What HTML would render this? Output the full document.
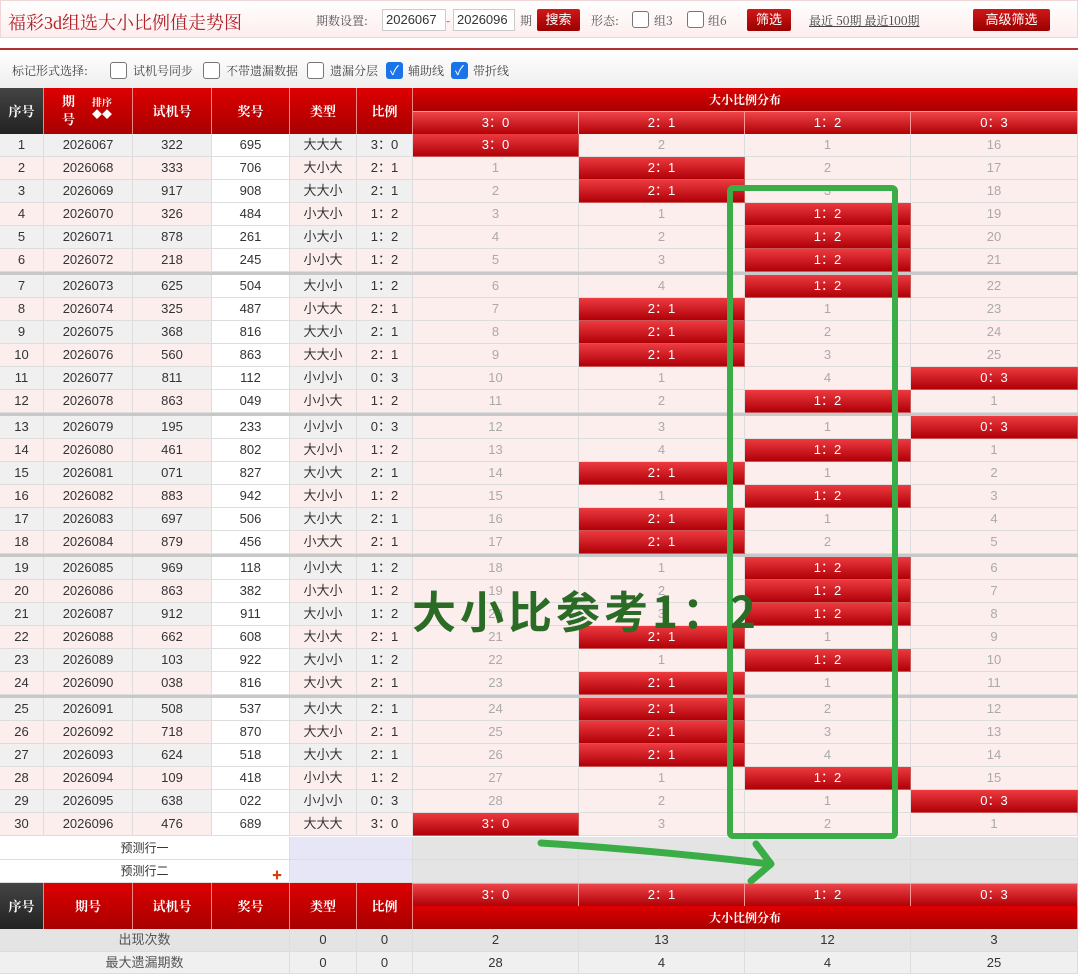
<!DOCTYPE html>
<html><head><meta charset="utf-8">
<style>
*{box-sizing:border-box;margin:0;padding:0}
body{width:1078px;height:974px;overflow:hidden;background:#fff;font-family:"Liberation Sans","Noto Sans CJK SC",sans-serif;font-size:13px;color:#333;position:relative}
.top{position:absolute;left:0;top:0;width:1078px;height:38px;background:linear-gradient(#fff,#fdeeee);border:1px solid #f0d6d6}
.title{position:absolute;left:7px;top:8px;font-size:18px;color:#b2222a;font-family:"Liberation Serif","Noto Serif CJK SC",serif}
.lbl{position:absolute;top:11px;font-size:12px;color:#555;font-family:"Noto Serif CJK SC",serif}
.inp{position:absolute;top:8px;height:22px;border:1px solid #ccc;background:#fff;font-size:13px;padding:2px 3px;color:#333}
.btn{position:absolute;top:8px;height:22px;background:linear-gradient(#d01818,#9a0000);color:#fff;font-size:13px;text-align:center;line-height:22px;border-radius:2px}
.cb{position:absolute;width:17px;height:17px;border:1.5px solid #777;border-radius:3px;background:#fff}
.cbc{position:absolute;width:17px;height:17px;border-radius:3px;background:#1a73e8;color:#fff;font-size:13px;line-height:17px;text-align:center}
.redline{position:absolute;left:0;top:48px;width:1078px;height:2px;background:#b03030}
.opts{position:absolute;left:0;top:51px;width:1078px;height:37px;background:linear-gradient(#fff,#eee)}
.o{position:absolute;top:11px;font-size:12px;color:#444;font-family:"Noto Serif CJK SC",serif}
.grid{position:absolute;left:0;width:1078px}
.r{display:flex;height:23px}
.r>div{border-right:1px solid #ddd;border-bottom:1px solid #ddd;text-align:center;line-height:22px;white-space:nowrap;overflow:hidden}
.c0{width:44px}.c1{width:89px}.c2{width:79px}.c3{width:78px}.c4{width:67px}.c5{width:56px}.d{width:166px}.d4{width:167px}
.o1>div{background:#f0f0f0}.e>div{background:#fdeeee}
.r>div.w{background:#fff}
.r>div.d,.r>div.d4{background:#fdeeee;color:#aaa}
.r>div.R{background:linear-gradient(#ec3a3f,#b00008);color:#fff;border-color:#c55}
.sep{border-top:3px solid #c8c8c8;height:26px}
.hd{position:absolute;color:#fff;font-weight:bold;text-align:center;font-family:"Noto Serif CJK SC",serif;font-size:13px;border-right:1px solid #e88}
.hr{background:linear-gradient(#d00,#a80000)}
.hk{background:linear-gradient(#444,#222)}
.sub{position:absolute;color:#fff;text-align:center;background:linear-gradient(#ee4448,#b00006);border-right:1px solid #f99;border-top:1px solid #f99;font-size:13px}
.stat{position:absolute;left:0;width:1078px;height:22px;display:flex}
.stat>div{border-right:1px solid #ddd;border-bottom:1px solid #ddd;text-align:center;line-height:22px}
</style></head><body>
<div class="top">
<div class="title">福彩3d组选大小比例值走势图</div>
<div class="lbl" style="left:315px">期数设置:</div>
<div class="inp" style="left:381px;width:64px">2026067</div>
<div class="lbl" style="left:445px;color:#333">-</div>
<div class="inp" style="left:452px;width:62px">2026096</div>
<div class="lbl" style="left:519px">期</div>
<div class="btn" style="left:536px;width:43px">搜索</div>
<div class="lbl" style="left:590px">形态:</div>
<div class="cb" style="left:631px;top:10px"></div><div class="lbl" style="left:653px">组3</div>
<div class="cb" style="left:686px;top:10px"></div><div class="lbl" style="left:707px">组6</div>
<div class="btn" style="left:746px;width:44px">筛选</div>
<div class="lbl" style="left:808px;text-decoration:underline;color:#444">最近 50期 最近100期</div>
<div class="btn" style="left:972px;width:77px">高级筛选</div>
</div>
<div class="redline"></div>
<div class="opts">
<div class="o" style="left:12px">标记形式选择:</div>
<div class="cb" style="left:110px;top:11px"></div><div class="o" style="left:133px">试机号同步</div>
<div class="cb" style="left:203px;top:11px"></div><div class="o" style="left:226px">不带遗漏数据</div>
<div class="cb" style="left:307px;top:11px"></div><div class="o" style="left:330px">遗漏分层</div>
<div class="cbc" style="left:386px;top:11px">✓</div><div class="o" style="left:408px">辅助线</div>
<div class="cbc" style="left:451px;top:11px">✓</div><div class="o" style="left:473px">带折线</div>
</div>
<div class="hd hk" style="left:0;top:88px;width:44px;height:46px;line-height:46px">序号</div>
<div class="hd hr" style="left:44px;top:88px;width:89px;height:46px"><div style="position:absolute;left:18px;top:4px;line-height:18px">期<br>号</div><div style="position:absolute;left:48px;top:8px;font-size:10px;line-height:12px">排序<br>◆◆</div></div>
<div class="hd hr" style="left:133px;top:88px;width:79px;height:46px;line-height:46px">试机号</div>
<div class="hd hr" style="left:212px;top:88px;width:78px;height:46px;line-height:46px">奖号</div>
<div class="hd hr" style="left:290px;top:88px;width:67px;height:46px;line-height:46px">类型</div>
<div class="hd hr" style="left:357px;top:88px;width:56px;height:46px;line-height:46px">比例</div>
<div class="hd hr" style="left:413px;top:88px;width:665px;height:23px;line-height:23px;font-size:12px">大小比例分布</div>
<div class="sub" style="left:413px;top:111px;width:166px;height:23px;line-height:22px">3：0</div>
<div class="sub" style="left:579px;top:111px;width:166px;height:23px;line-height:22px">2：1</div>
<div class="sub" style="left:745px;top:111px;width:166px;height:23px;line-height:22px">1：2</div>
<div class="sub" style="left:911px;top:111px;width:167px;height:23px;line-height:22px">0：3</div>

<div class="grid" style="top:134px">
<div class="r o1"><div class="c0">1</div><div class="c1">2026067</div><div class="c2">322</div><div class="c3 w">695</div><div class="c4">大大大</div><div class="c5">3：0</div><div class="d R">3：0</div><div class="d">2</div><div class="d">1</div><div class="d4">16</div></div>
<div class="r e"><div class="c0">2</div><div class="c1">2026068</div><div class="c2">333</div><div class="c3 w">706</div><div class="c4">大小大</div><div class="c5">2：1</div><div class="d">1</div><div class="d R">2：1</div><div class="d">2</div><div class="d4">17</div></div>
<div class="r o1"><div class="c0">3</div><div class="c1">2026069</div><div class="c2">917</div><div class="c3 w">908</div><div class="c4">大大小</div><div class="c5">2：1</div><div class="d">2</div><div class="d R">2：1</div><div class="d">3</div><div class="d4">18</div></div>
<div class="r e"><div class="c0">4</div><div class="c1">2026070</div><div class="c2">326</div><div class="c3 w">484</div><div class="c4">小大小</div><div class="c5">1：2</div><div class="d">3</div><div class="d">1</div><div class="d R">1：2</div><div class="d4">19</div></div>
<div class="r o1"><div class="c0">5</div><div class="c1">2026071</div><div class="c2">878</div><div class="c3 w">261</div><div class="c4">小大小</div><div class="c5">1：2</div><div class="d">4</div><div class="d">2</div><div class="d R">1：2</div><div class="d4">20</div></div>
<div class="r e"><div class="c0">6</div><div class="c1">2026072</div><div class="c2">218</div><div class="c3 w">245</div><div class="c4">小小大</div><div class="c5">1：2</div><div class="d">5</div><div class="d">3</div><div class="d R">1：2</div><div class="d4">21</div></div>
<div class="r o1 sep"><div class="c0">7</div><div class="c1">2026073</div><div class="c2">625</div><div class="c3 w">504</div><div class="c4">大小小</div><div class="c5">1：2</div><div class="d">6</div><div class="d">4</div><div class="d R">1：2</div><div class="d4">22</div></div>
<div class="r e"><div class="c0">8</div><div class="c1">2026074</div><div class="c2">325</div><div class="c3 w">487</div><div class="c4">小大大</div><div class="c5">2：1</div><div class="d">7</div><div class="d R">2：1</div><div class="d">1</div><div class="d4">23</div></div>
<div class="r o1"><div class="c0">9</div><div class="c1">2026075</div><div class="c2">368</div><div class="c3 w">816</div><div class="c4">大大小</div><div class="c5">2：1</div><div class="d">8</div><div class="d R">2：1</div><div class="d">2</div><div class="d4">24</div></div>
<div class="r e"><div class="c0">10</div><div class="c1">2026076</div><div class="c2">560</div><div class="c3 w">863</div><div class="c4">大大小</div><div class="c5">2：1</div><div class="d">9</div><div class="d R">2：1</div><div class="d">3</div><div class="d4">25</div></div>
<div class="r o1"><div class="c0">11</div><div class="c1">2026077</div><div class="c2">811</div><div class="c3 w">112</div><div class="c4">小小小</div><div class="c5">0：3</div><div class="d">10</div><div class="d">1</div><div class="d">4</div><div class="d4 R">0：3</div></div>
<div class="r e"><div class="c0">12</div><div class="c1">2026078</div><div class="c2">863</div><div class="c3 w">049</div><div class="c4">小小大</div><div class="c5">1：2</div><div class="d">11</div><div class="d">2</div><div class="d R">1：2</div><div class="d4">1</div></div>
<div class="r o1 sep"><div class="c0">13</div><div class="c1">2026079</div><div class="c2">195</div><div class="c3 w">233</div><div class="c4">小小小</div><div class="c5">0：3</div><div class="d">12</div><div class="d">3</div><div class="d">1</div><div class="d4 R">0：3</div></div>
<div class="r e"><div class="c0">14</div><div class="c1">2026080</div><div class="c2">461</div><div class="c3 w">802</div><div class="c4">大小小</div><div class="c5">1：2</div><div class="d">13</div><div class="d">4</div><div class="d R">1：2</div><div class="d4">1</div></div>
<div class="r o1"><div class="c0">15</div><div class="c1">2026081</div><div class="c2">071</div><div class="c3 w">827</div><div class="c4">大小大</div><div class="c5">2：1</div><div class="d">14</div><div class="d R">2：1</div><div class="d">1</div><div class="d4">2</div></div>
<div class="r e"><div class="c0">16</div><div class="c1">2026082</div><div class="c2">883</div><div class="c3 w">942</div><div class="c4">大小小</div><div class="c5">1：2</div><div class="d">15</div><div class="d">1</div><div class="d R">1：2</div><div class="d4">3</div></div>
<div class="r o1"><div class="c0">17</div><div class="c1">2026083</div><div class="c2">697</div><div class="c3 w">506</div><div class="c4">大小大</div><div class="c5">2：1</div><div class="d">16</div><div class="d R">2：1</div><div class="d">1</div><div class="d4">4</div></div>
<div class="r e"><div class="c0">18</div><div class="c1">2026084</div><div class="c2">879</div><div class="c3 w">456</div><div class="c4">小大大</div><div class="c5">2：1</div><div class="d">17</div><div class="d R">2：1</div><div class="d">2</div><div class="d4">5</div></div>
<div class="r o1 sep"><div class="c0">19</div><div class="c1">2026085</div><div class="c2">969</div><div class="c3 w">118</div><div class="c4">小小大</div><div class="c5">1：2</div><div class="d">18</div><div class="d">1</div><div class="d R">1：2</div><div class="d4">6</div></div>
<div class="r e"><div class="c0">20</div><div class="c1">2026086</div><div class="c2">863</div><div class="c3 w">382</div><div class="c4">小大小</div><div class="c5">1：2</div><div class="d">19</div><div class="d">2</div><div class="d R">1：2</div><div class="d4">7</div></div>
<div class="r o1"><div class="c0">21</div><div class="c1">2026087</div><div class="c2">912</div><div class="c3 w">911</div><div class="c4">大小小</div><div class="c5">1：2</div><div class="d">20</div><div class="d">3</div><div class="d R">1：2</div><div class="d4">8</div></div>
<div class="r e"><div class="c0">22</div><div class="c1">2026088</div><div class="c2">662</div><div class="c3 w">608</div><div class="c4">大小大</div><div class="c5">2：1</div><div class="d">21</div><div class="d R">2：1</div><div class="d">1</div><div class="d4">9</div></div>
<div class="r o1"><div class="c0">23</div><div class="c1">2026089</div><div class="c2">103</div><div class="c3 w">922</div><div class="c4">大小小</div><div class="c5">1：2</div><div class="d">22</div><div class="d">1</div><div class="d R">1：2</div><div class="d4">10</div></div>
<div class="r e"><div class="c0">24</div><div class="c1">2026090</div><div class="c2">038</div><div class="c3 w">816</div><div class="c4">大小大</div><div class="c5">2：1</div><div class="d">23</div><div class="d R">2：1</div><div class="d">1</div><div class="d4">11</div></div>
<div class="r o1 sep"><div class="c0">25</div><div class="c1">2026091</div><div class="c2">508</div><div class="c3 w">537</div><div class="c4">大小大</div><div class="c5">2：1</div><div class="d">24</div><div class="d R">2：1</div><div class="d">2</div><div class="d4">12</div></div>
<div class="r e"><div class="c0">26</div><div class="c1">2026092</div><div class="c2">718</div><div class="c3 w">870</div><div class="c4">大大小</div><div class="c5">2：1</div><div class="d">25</div><div class="d R">2：1</div><div class="d">3</div><div class="d4">13</div></div>
<div class="r o1"><div class="c0">27</div><div class="c1">2026093</div><div class="c2">624</div><div class="c3 w">518</div><div class="c4">大小大</div><div class="c5">2：1</div><div class="d">26</div><div class="d R">2：1</div><div class="d">4</div><div class="d4">14</div></div>
<div class="r e"><div class="c0">28</div><div class="c1">2026094</div><div class="c2">109</div><div class="c3 w">418</div><div class="c4">小小大</div><div class="c5">1：2</div><div class="d">27</div><div class="d">1</div><div class="d R">1：2</div><div class="d4">15</div></div>
<div class="r o1"><div class="c0">29</div><div class="c1">2026095</div><div class="c2">638</div><div class="c3 w">022</div><div class="c4">小小小</div><div class="c5">0：3</div><div class="d">28</div><div class="d">2</div><div class="d">1</div><div class="d4 R">0：3</div></div>
<div class="r e"><div class="c0">30</div><div class="c1">2026096</div><div class="c2">476</div><div class="c3 w">689</div><div class="c4">大大大</div><div class="c5">3：0</div><div class="d R">3：0</div><div class="d">3</div><div class="d">2</div><div class="d4">1</div></div>
</div>
<div class="stat" style="top:837px;height:23px"><div style="width:290px;background:#fff;font-size:12px">预测行一</div><div style="width:123px;background:#e6e6f6"></div><div style="width:166px;background:#e4e4e4"></div><div style="width:166px;background:#e4e4e4"></div><div style="width:166px;background:#e4e4e4"></div><div style="width:167px;background:#e4e4e4"></div></div>
<div class="stat" style="top:860px;height:23px"><div style="width:290px;background:#fff;font-size:12px;position:relative">预测行二<span style="position:absolute;left:272px;top:6px;color:#d04010;font-size:10px">✚</span></div><div style="width:123px;background:#e6e6f6"></div><div style="width:166px;background:#e4e4e4"></div><div style="width:166px;background:#e4e4e4"></div><div style="width:166px;background:#e4e4e4"></div><div style="width:167px;background:#e4e4e4"></div></div>
<div class="hd hk" style="left:0;top:883px;width:44px;height:46px;line-height:46px">序号</div>
<div class="hd hr" style="left:44px;top:883px;width:89px;height:46px;line-height:46px">期号</div>
<div class="hd hr" style="left:133px;top:883px;width:79px;height:46px;line-height:46px">试机号</div>
<div class="hd hr" style="left:212px;top:883px;width:78px;height:46px;line-height:46px">奖号</div>
<div class="hd hr" style="left:290px;top:883px;width:67px;height:46px;line-height:46px">类型</div>
<div class="hd hr" style="left:357px;top:883px;width:56px;height:46px;line-height:46px">比例</div>
<div class="sub" style="left:413px;top:883px;width:166px;height:23px;line-height:22px">3：0</div>
<div class="sub" style="left:579px;top:883px;width:166px;height:23px;line-height:22px">2：1</div>
<div class="sub" style="left:745px;top:883px;width:166px;height:23px;line-height:22px">1：2</div>
<div class="sub" style="left:911px;top:883px;width:167px;height:23px;line-height:22px">0：3</div>
<div class="hd hr" style="left:413px;top:906px;width:665px;height:23px;line-height:23px;font-size:12px">大小比例分布</div>
<div class="stat" style="top:929px;height:23px;background:#e4e4e4"><div style="width:290px;color:#555">出现次数</div><div style="width:67px">0</div><div style="width:56px">0</div><div style="width:166px">2</div><div style="width:166px">13</div><div style="width:166px">12</div><div style="width:167px">3</div></div>
<div class="stat" style="top:952px;height:22px;background:#f0f0f0"><div style="width:290px;color:#555">最大遗漏期数</div><div style="width:67px">0</div><div style="width:56px">0</div><div style="width:166px">28</div><div style="width:166px">4</div><div style="width:166px">4</div><div style="width:167px">25</div></div>
<svg style="position:absolute;left:0;top:0" width="1078" height="974">
<rect x="730" y="188" width="165" height="648" rx="3" fill="none" stroke="#3aad46" stroke-width="6"/>
<path d="M541 843 Q650 850 770 864" fill="none" stroke="#3aad46" stroke-width="7" stroke-linecap="round"/>
<path d="M756 844 L771 864 L751 881" fill="none" stroke="#3aad46" stroke-width="7" stroke-linecap="round" stroke-linejoin="round"/>
</svg>
<div style="position:absolute;left:412px;top:584px;font-size:44px;font-weight:bold;color:#2a6b25;font-family:'Noto Sans CJK SC',sans-serif;letter-spacing:4px;line-height:50px">大小比参考1：2</div>
</body></html>
